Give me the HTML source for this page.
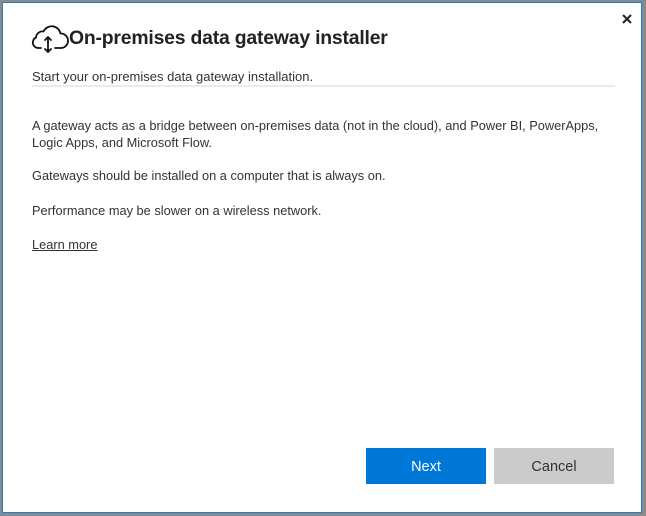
<!DOCTYPE html>
<html><head><meta charset="utf-8"><style>
html,body{margin:0;padding:0;width:646px;height:516px;background:#8a8a8a;overflow:hidden;font-family:"Liberation Sans",sans-serif;}
.win{position:absolute;left:2px;top:2px;width:638px;height:509px;border:1px solid #1a7fd6;background:#fff;}
.t{position:absolute;color:#333;font-size:12.8px;white-space:nowrap;}
.btn{position:absolute;top:445px;width:120px;height:36px;line-height:38px;text-align:center;font-size:14.5px;}
</style></head><body>
<div class="win">
<svg style="position:absolute;left:28px;top:19px" width="40" height="34" viewBox="0 0 40 34" fill="none" stroke="#111" stroke-width="1.8" stroke-linejoin="round" stroke-linecap="round">
<path d="M10 26 H7.5 A5.5 5.5 0 0 1 5 15.5 A6.5 6.5 0 0 1 12.5 9.5 A9 9 0 0 1 29.5 11.5 A7 7 0 0 1 30 26 H24"/>
<path d="M17 15 V30 M14 18 L17 15 L20 18 M14 27 L17 30 L20 27"/>
</svg>
<div class="t" style="left:66px;top:24px;font-size:19.4px;font-weight:bold;color:#222;letter-spacing:-0.2px">On-premises data gateway installer</div>
<div class="t" style="left:29px;top:66px;font-size:13px">Start your on-premises data gateway installation.</div>
<div style="position:absolute;left:29px;top:82px;width:583px;height:2px;background:#ebebeb"></div>
<div class="t" style="left:29px;top:114px;line-height:17px">A gateway acts as a bridge between on-premises data (not in the cloud), and Power BI, PowerApps,<br>Logic Apps, and Microsoft Flow.</div>
<div class="t" style="left:29px;top:165px">Gateways should be installed on a computer that is always on.</div>
<div class="t" style="left:29px;top:200px">Performance may be slower on a wireless network.</div>
<div class="t" style="left:29px;top:234px;text-decoration:underline">Learn more</div>
<svg style="position:absolute;left:619px;top:11px" width="10" height="10" viewBox="0 0 10 10" stroke="#222" stroke-width="2"><path d="M1 1 L9 9 M9 1 L1 9"/></svg>
<div class="btn" style="left:363px;background:#0078d7;color:#fff">Next</div>
<div class="btn" style="left:491px;background:#cbcbcb;color:#333">Cancel</div>
</div>
</body></html>
